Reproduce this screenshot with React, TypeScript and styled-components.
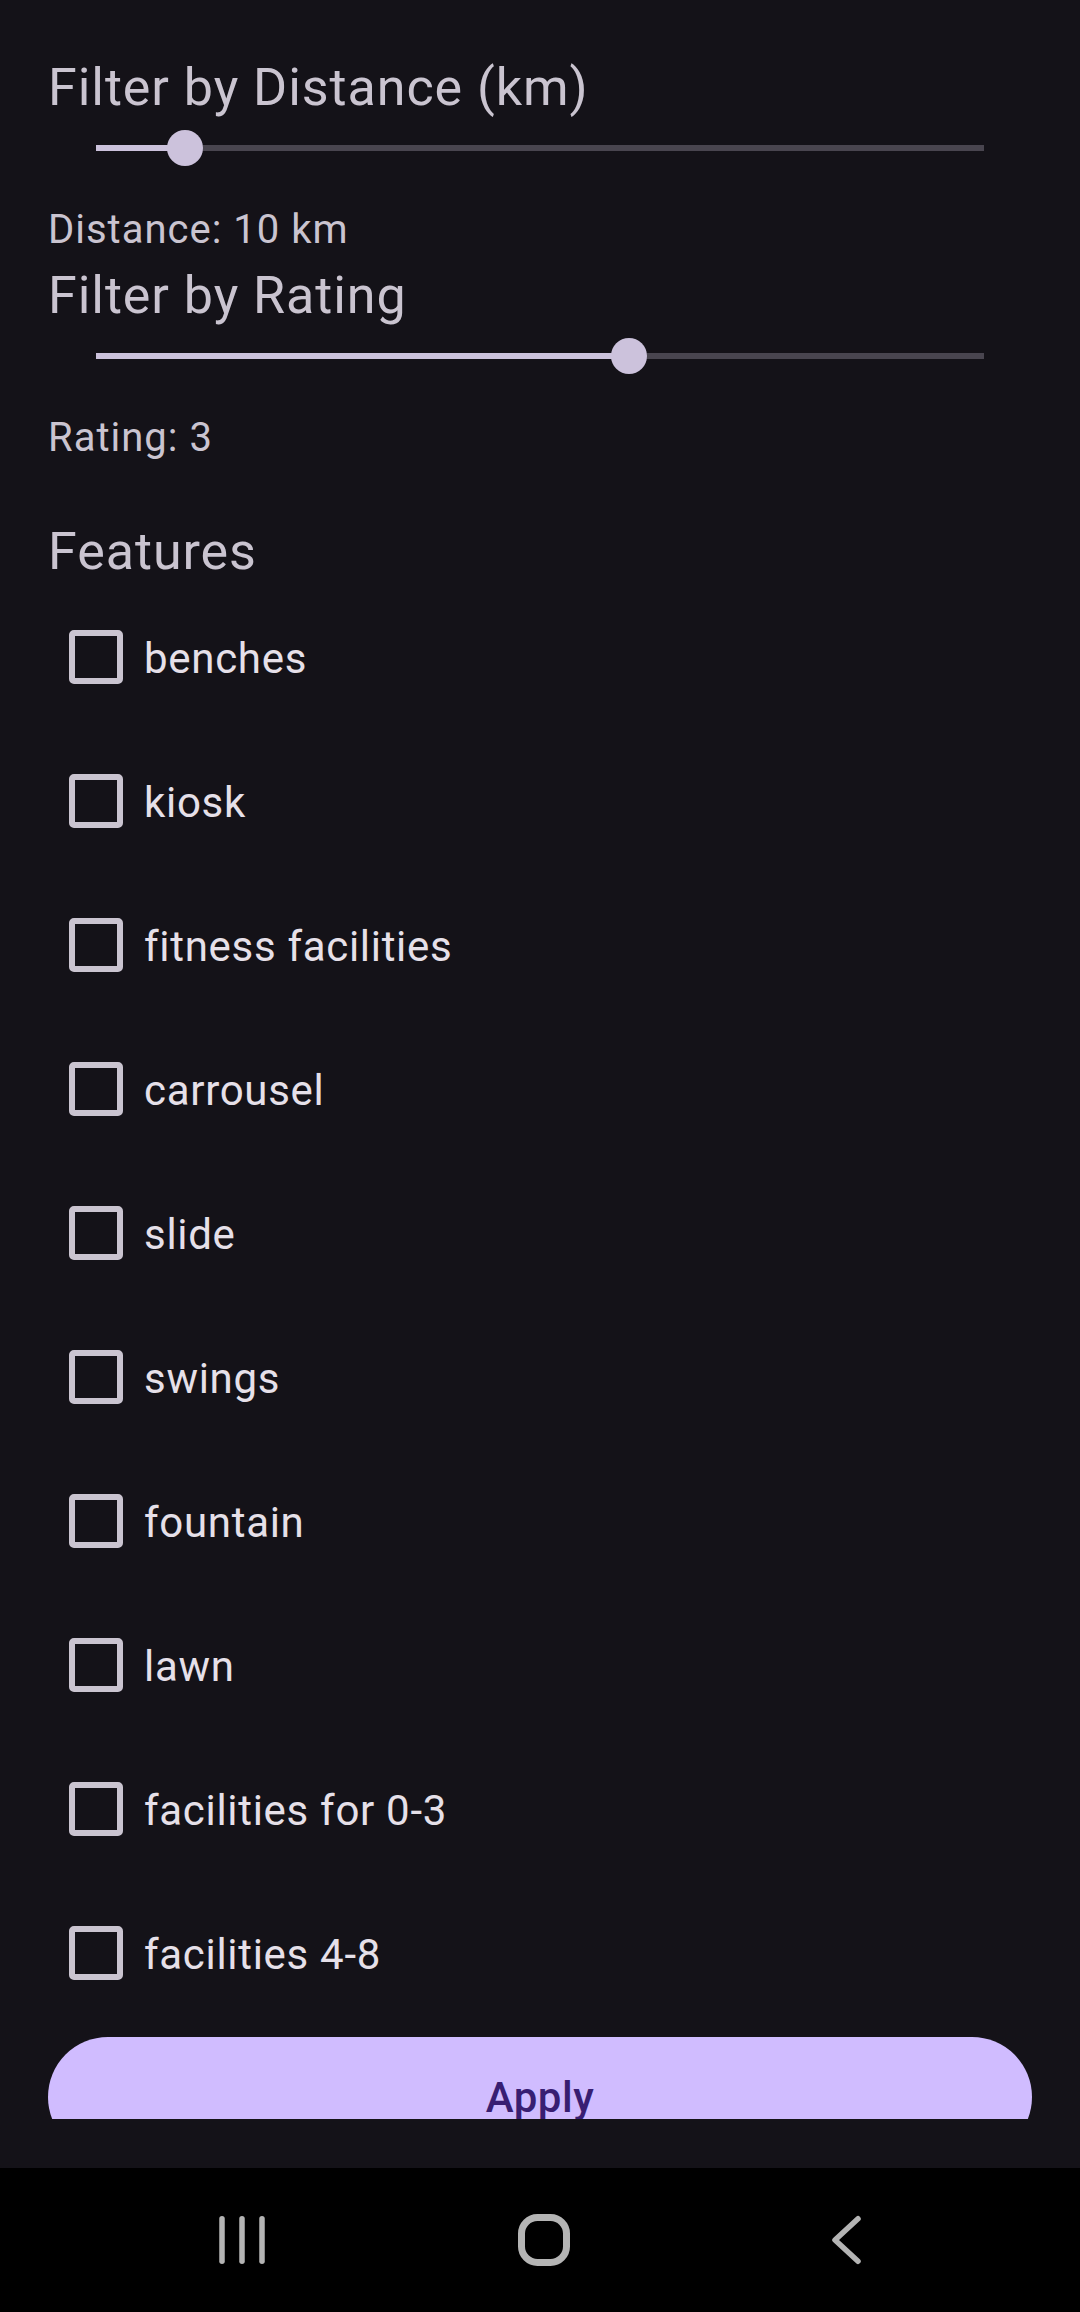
import React from "react";
import styled, { createGlobalStyle } from "styled-components";

const Global = createGlobalStyle`
  html, body { margin: 0; padding: 0; background: #141218; }
  body { font-family: Roboto, "Noto Sans", "Liberation Sans", sans-serif; }
  * { box-sizing: border-box; }
`;

const Screen = styled.div`
  width: 1080px;
  height: 2312px;
  display: flex;
  flex-direction: column;
  background: #141218;
  overflow: hidden;
`;

const Scroll = styled.div`
  height: 2119px;
  flex-shrink: 0;
  overflow: hidden;
  display: flex;
  flex-direction: column;
  padding: 56px 48px 0;
`;

const Heading = styled.h2<{ $gap: number }>`
  margin: ${(p) => p.$gap}px 0 0;
  font-size: 52px;
  line-height: 64px;
  font-weight: 400;
  color: #cac4d0;
  letter-spacing: 0.95px;
  flex-shrink: 0;
`;

const ValueText = styled.div`
  margin-top: 30px;
  font-size: 40px;
  line-height: 48px;
  color: #cac4d0;
  letter-spacing: 1px;
  flex-shrink: 0;
`;

const SliderWrap = styled.div`
  height: 56px;
  padding: 0 48px;
  display: flex;
  align-items: center;
  flex-shrink: 0;
`;

const Track = styled.div`
  position: relative;
  flex: 1;
  height: 6px;
  background: #49454f;
`;

const ActiveTrack = styled.div`
  height: 100%;
  background: #ccc2dc;
`;

const Thumb = styled.div`
  position: absolute;
  top: 50%;
  width: 36px;
  height: 36px;
  border-radius: 50%;
  background: #ccc2dc;
  transform: translate(-50%, -50%);
`;

const List = styled.div`
  margin-top: 1px;
  display: flex;
  flex-direction: column;
  flex-shrink: 0;
`;

const Row = styled.label`
  height: 144px;
  display: flex;
  align-items: center;
  padding-left: 21px;
`;

const Box = styled.span`
  width: 54px;
  height: 54px;
  border: 6px solid #cac4d0;
  border-radius: 5px;
  flex-shrink: 0;
`;

const Label = styled.span`
  margin-left: 21px;
  margin-top: 4px;
  font-size: 42px;
  line-height: 48px;
  color: #e6e0e9;
  letter-spacing: 0.7px;
`;

const ApplyButton = styled.button`
  margin-top: 12px;
  height: 120px;
  flex-shrink: 0;
  border: none;
  border-radius: 60px;
  background: #d0bcff;
  color: #381e72;
  font-family: Roboto, "Noto Sans", sans-serif;
  font-size: 42px;
  font-weight: 500;
  letter-spacing: 0.5px;
  padding: 0;
`;

const BottomGap = styled.div`
  height: 49px;
  flex-shrink: 0;
`;

const NavBar = styled.div`
  height: 144px;
  flex-shrink: 0;
  background: #000;
  display: flex;
  align-items: center;
  padding-left: 142px;
  gap: 102px;
`;

const NavSlot = styled.div`
  width: 200px;
  height: 52px;
  display: flex;
  align-items: center;
  justify-content: center;
`;

function Slider({ value, max }: { value: number; max: number }) {
  const pct = (value / max) * 100;
  return (
    <SliderWrap>
      <Track>
        <ActiveTrack style={{ width: `${pct}%` }} />
        <Thumb style={{ left: `${pct}%` }} />
      </Track>
    </SliderWrap>
  );
}

const features = [
  "benches",
  "kiosk",
  "fitness facilities",
  "carrousel",
  "slide",
  "swings",
  "fountain",
  "lawn",
  "facilities for 0-3",
  "facilities 4-8",
];

const iconColor = "#b4b4b4";

export default function App() {
  return (
    <Screen>
      <Global />
      <Scroll>
        <Heading $gap={0}>Filter by Distance (km)</Heading>
        <Slider value={10} max={100} />
        <ValueText>Distance: 10 km</ValueText>
        <Heading $gap={10}>Filter by Rating</Heading>
        <Slider value={3} max={5} />
        <ValueText>Rating: 3</ValueText>
        <Heading $gap={58}>Features</Heading>
        <List>
          {features.map((f) => (
            <Row key={f}>
              <Box />
              <Label>{f}</Label>
            </Row>
          ))}
        </List>
        <ApplyButton>Apply</ApplyButton>
      </Scroll>
      <BottomGap />
      <NavBar>
        <NavSlot>
          <svg width="52" height="52" viewBox="0 0 52 52">
            <g stroke={iconColor} strokeWidth="5.5" strokeLinecap="round">
              <line x1="6" y1="4.75" x2="6" y2="47.25" />
              <line x1="26" y1="4.75" x2="26" y2="47.25" />
              <line x1="46" y1="4.75" x2="46" y2="47.25" />
            </g>
          </svg>
        </NavSlot>
        <NavSlot>
          <svg width="52" height="52" viewBox="0 0 52 52">
            <rect x="3.5" y="3.5" width="45" height="45" rx="16" fill="none" stroke={iconColor} strokeWidth="7" />
          </svg>
        </NavSlot>
        <NavSlot>
          <svg width="52" height="52" viewBox="0 0 52 52">
            <polyline
              points="38,4.75 15,26 38,47.25"
              fill="none"
              stroke={iconColor}
              strokeWidth="5.5"
              strokeLinecap="round"
              strokeLinejoin="round"
            />
          </svg>
        </NavSlot>
      </NavBar>
    </Screen>
  );
}
